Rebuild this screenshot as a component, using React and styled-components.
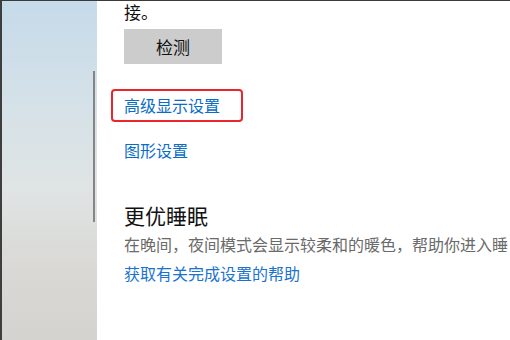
import React from 'react';
import styled, { createGlobalStyle } from 'styled-components';

const GlobalStyle = createGlobalStyle`
    html, body {
        margin: 0;
        padding: 0;
        background: #fff;
    }
    body {
        width: 510px;
        height: 340px;
        overflow: hidden;
        font-family: "Noto Sans CJK SC", "Noto Sans", sans-serif;
    }
`;

const Page = styled.div`
    display: flex;
    width: 510px;
    height: 340px;
    border-top: 1px solid #3a3a3a;
    border-left: 2px solid #3e3e3e;
    box-sizing: border-box;
    overflow: hidden;
`;

const Sidebar = styled.div`
    flex: 0 0 95px;
    display: flex;
    justify-content: flex-end;
    background: linear-gradient(180deg, #c5daea 0%, #d5e1e8 30%, #dfe4e4 55%, #d9d8d4 80%, #d4d3cf 100%);
`;

const ScrollThumb = styled.div`
    width: 2px;
    height: 151px;
    margin-top: 70px;
    margin-right: 2px;
    background: #858585;
`;

const Main = styled.div`
    flex: 1;
    display: flex;
    flex-direction: column;
    align-items: flex-start;
    padding-left: 27px;
    background: #fff;
    min-width: 0;
    overflow: hidden;
`;

const Text = styled.div`
    font-size: 17px;
    line-height: 22px;
    color: #111;
`;

const Button = styled.button`
    margin-top: 6px;
    width: 98px;
    height: 35px;
    border: none;
    background: #cccccc;
    color: #111;
    font-family: inherit;
    font-size: 17px;
    padding: 0;
`;

const LinkWrap = styled.div`
    position: relative;
    margin-top: ${({ $top }) => $top}px;
`;

const Link = styled.a`
    display: block;
    font-size: 16px;
    line-height: 24px;
    color: ${({ $color }) => $color || '#0a6cc9'};
    text-decoration: none;
    white-space: nowrap;
`;

const Highlight = styled.span`
    position: absolute;
    left: -13px;
    top: -4px;
    width: 132px;
    height: 33px;
    border: 2px solid #e8262b;
    border-radius: 4px;
    box-sizing: border-box;
`;

const Heading = styled.h2`
    margin: 39px 0 0;
    font-size: 21px;
    font-weight: 400;
    line-height: 28px;
    color: #111;
`;

const Desc = styled.p`
    margin: 4px 0 0;
    font-size: 16px;
    line-height: 22px;
    color: #6a6a6a;
    white-space: nowrap;
`;

const App = () => {
    return (
        <>
            <GlobalStyle />
            <Page>
                <Sidebar>
                    <ScrollThumb />
                </Sidebar>
                <Main>
                    <Text>接。</Text>
                    <Button>检测</Button>
                    <LinkWrap $top={29}>
                        <Highlight />
                        <Link href="#">高级显示设置</Link>
                    </LinkWrap>
                    <LinkWrap $top={21}>
                        <Link href="#">图形设置</Link>
                    </LinkWrap>
                    <Heading>更优睡眠</Heading>
                    <Desc>在晚间，夜间模式会显示较柔和的暖色，帮助你进入睡</Desc>
                    <LinkWrap $top={6}>
                        <Link href="#" $color="#1a73d0">获取有关完成设置的帮助</Link>
                    </LinkWrap>
                </Main>
            </Page>
        </>
    );
};

export default App;
